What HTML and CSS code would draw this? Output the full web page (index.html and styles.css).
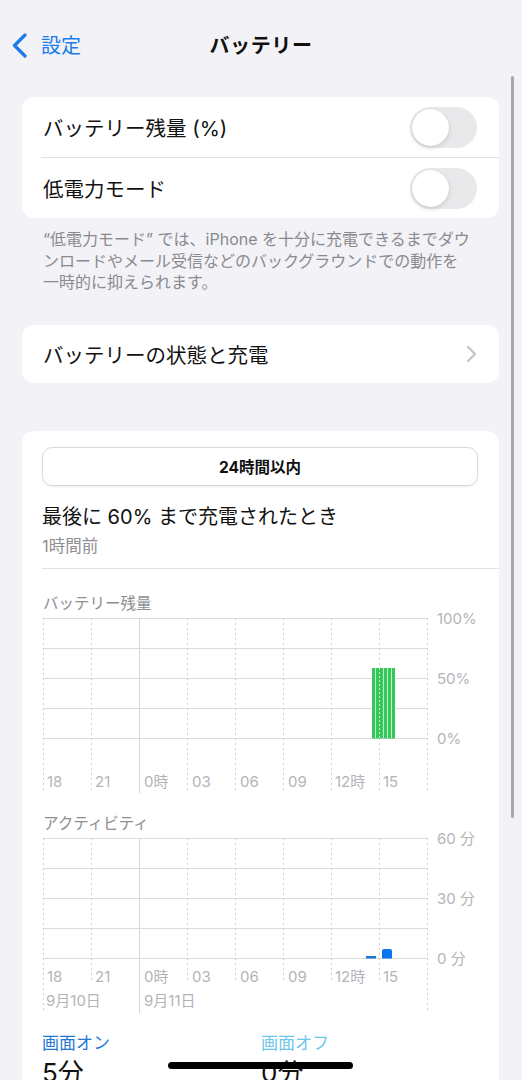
FILE: index.html
```html
<!DOCTYPE html>
<html lang="ja">
<head>
    <meta charset="UTF-8">
    <meta name="viewport" content="width=device-width, initial-scale=1.0">
    <title>バッテリー</title>
    <link rel="stylesheet" href="styles.css">
</head>
<body>
    <div class="screen">
        <div class="nav">
            <div class="back">
                <svg class="back-icon" width="17" height="25" viewBox="0 0 17 25">
                    <path d="M14 2 L3.5 12.5 L14 23" fill="none" stroke="#1a7cec" stroke-width="3.2" stroke-linecap="round" stroke-linejoin="round"/>
                </svg>
                <span>設定</span>
            </div>
            <div class="nav-title">バッテリー</div>
            <div></div>
        </div>

        <div class="card">
            <div class="row">
                <span>バッテリー残量 (%)</span>
                <div class="toggle"><div class="knob"></div></div>
            </div>
            <div class="row">
                <span>低電力モード</span>
                <div class="toggle"><div class="knob"></div></div>
            </div>
        </div>
        <p class="note">“低電力モード” では、iPhone を十分に充電できるまでダウンロードやメール受信などのバックグラウンドでの動作を<br>一時的に抑えられます。</p>

        <div class="card card-link">
            <div class="row">
                <span>バッテリーの状態と充電</span>
                <svg width="11" height="18" viewBox="0 0 11 18">
                    <path d="M2 2 L9 9 L2 16" fill="none" stroke="#c4c4c7" stroke-width="2.2" stroke-linecap="round" stroke-linejoin="round"/>
                </svg>
            </div>
        </div>

        <div class="card card-usage">
            <div class="segment">24時間以内</div>
            <div class="last-charge">最後に 60% まで充電されたとき</div>
            <div class="ago">1時間前</div>
            <div class="divider"></div>

            <div class="chart-label">バッテリー残量</div>
            <svg class="chart" width="457" height="181" viewBox="0 0 457 181">
                <g stroke="#dcdcde" stroke-width="1">
                    <line x1="1" y1="6.5" x2="385" y2="6.5"/>
                    <line x1="1" y1="36.5" x2="385" y2="36.5"/>
                    <line x1="1" y1="66.5" x2="385" y2="66.5"/>
                    <line x1="1" y1="96.5" x2="385" y2="96.5"/>
                    <line x1="1" y1="126.5" x2="385" y2="126.5"/>
                </g>
                <g stroke="#d0d0d3" stroke-width="1" stroke-dasharray="2 3">
                    <line x1="1.5" y1="6" x2="1.5" y2="181"/>
                    <line x1="49.5" y1="6" x2="49.5" y2="181"/>
                    <line x1="145.5" y1="6" x2="145.5" y2="181"/>
                    <line x1="193.5" y1="6" x2="193.5" y2="181"/>
                    <line x1="241.5" y1="6" x2="241.5" y2="181"/>
                    <line x1="289.5" y1="6" x2="289.5" y2="181"/>
                    <line x1="337.5" y1="6" x2="337.5" y2="181"/>
                    <line x1="385.5" y1="6" x2="385.5" y2="181"/>
                </g>
                <line x1="97.5" y1="6" x2="97.5" y2="181" stroke="#d6d6d9" stroke-width="1"/>
                <rect x="330" y="56" width="23" height="70.5" fill="#34c759"/>
                <g stroke="#c2efcc" stroke-width="1">
                    <line x1="333.5" y1="56" x2="333.5" y2="126"/>
                    <line x1="337.5" y1="56" x2="337.5" y2="126" stroke-dasharray="2 2"/>
                    <line x1="341.5" y1="56" x2="341.5" y2="126"/>
                    <line x1="345.5" y1="56" x2="345.5" y2="126"/>
                    <line x1="349.5" y1="56" x2="349.5" y2="126"/>
                </g>
                <g class="axis-y">
                    <text x="395" y="6">100%</text>
                    <text x="395" y="66">50%</text>
                    <text x="395" y="126">0%</text>
                </g>
                <g class="axis-x">
                    <text x="5" y="169">18</text>
                    <text x="53" y="169">21</text>
                    <text x="102" y="169">0時</text>
                    <text x="150" y="169">03</text>
                    <text x="198" y="169">06</text>
                    <text x="246" y="169">09</text>
                    <text x="293" y="169">12時</text>
                    <text x="341" y="169">15</text>
                </g>
            </svg>

            <div class="chart-label chart-label-2">アクティビティ</div>
            <svg class="chart" width="457" height="181" viewBox="0 0 457 181">
                <g stroke="#dcdcde" stroke-width="1">
                    <line x1="1" y1="6.5" x2="385" y2="6.5"/>
                    <line x1="1" y1="36.5" x2="385" y2="36.5"/>
                    <line x1="1" y1="66.5" x2="385" y2="66.5"/>
                    <line x1="1" y1="96.5" x2="385" y2="96.5"/>
                    <line x1="1" y1="126.5" x2="385" y2="126.5"/>
                </g>
                <g stroke="#d0d0d3" stroke-width="1" stroke-dasharray="2 3">
                    <line x1="1.5" y1="6" x2="1.5" y2="181"/>
                    <line x1="49.5" y1="6" x2="49.5" y2="150"/>
                    <line x1="145.5" y1="6" x2="145.5" y2="150"/>
                    <line x1="193.5" y1="6" x2="193.5" y2="150"/>
                    <line x1="241.5" y1="6" x2="241.5" y2="150"/>
                    <line x1="289.5" y1="6" x2="289.5" y2="150"/>
                    <line x1="337.5" y1="6" x2="337.5" y2="150"/>
                    <line x1="385.5" y1="6" x2="385.5" y2="181"/>
                </g>
                <line x1="97.5" y1="6" x2="97.5" y2="181" stroke="#d6d6d9" stroke-width="1"/>
                <rect x="324" y="124" width="10" height="2.5" fill="#1a74e0"/>
                <path d="M340 126.5 V119 Q340 117 342 117 H348 Q350 117 350 119 V126.5 Z" fill="#0a74ee"/>
                <g class="axis-y">
                    <text x="395" y="6">60 分</text>
                    <text x="395" y="66">30 分</text>
                    <text x="395" y="126">0 分</text>
                </g>
                <g class="axis-x">
                    <text x="5" y="144">18</text>
                    <text x="53" y="144">21</text>
                    <text x="102" y="144">0時</text>
                    <text x="150" y="144">03</text>
                    <text x="198" y="144">06</text>
                    <text x="246" y="144">09</text>
                    <text x="293" y="144">12時</text>
                    <text x="341" y="144">15</text>
                    <text x="4" y="168">9月10日</text>
                    <text x="102" y="168">9月11日</text>
                </g>
            </svg>

            <div class="screen-time">
                <div class="st-col">
                    <div class="st-label on">画面オン</div>
                    <div class="st-value">5分</div>
                </div>
                <div class="st-col">
                    <div class="st-label off">画面オフ</div>
                    <div class="st-value">0分</div>
                </div>
            </div>
        </div>

        <div class="scroll-bar"></div>
        <div class="home-bar"></div>
    </div>
</body>
</html>
```

FILE: styles.css
```css
body {
    margin: 0;
    background-color: #f2f2f7;
    font-family: Inter, "Noto Sans CJK JP", sans-serif;
    color: #111;
}
.screen {
    position: relative;
    width: 522px;
    height: 1080px;
    overflow: hidden;
}
.nav {
    display: grid;
    grid-template-columns: 1fr auto 1fr;
    align-items: center;
    height: 89px;
    padding-bottom: 8px;
}
.back {
    display: flex;
    align-items: center;
    gap: 13px;
    padding-left: 11px;
    color: #1a7cec;
    font-size: 20px;
}
.back-icon {
    margin-top: 1px;
}
.nav-title {
    font-size: 20px;
    font-weight: 700;
    letter-spacing: 0.6px;
}
.card {
    margin: 0 23px 0 22px;
    background-color: white;
    border-radius: 12px;
}
.row {
    display: flex;
    align-items: center;
    justify-content: space-between;
    height: 60px;
    padding: 0 22px 0 21px;
    font-size: 20.5px;
}
.row + .row {
    border-top: 1px solid #e0e0e3;
    margin-left: 19px;
    padding-left: 2px;
}
.toggle {
    width: 67px;
    height: 41px;
    border-radius: 21px;
    background-color: #e9e9eb;
    display: flex;
    align-items: center;
    padding-left: 2px;
    box-sizing: border-box;
}
.knob {
    width: 37px;
    height: 37px;
    border-radius: 50%;
    background-color: white;
    box-shadow: 0 2px 5px rgba(0,0,0,0.13), 0 0 1px rgba(0,0,0,0.1);
}
.note {
    width: 436px;
    margin: 11px 0 0 43px;
    font-size: 16px;
    line-height: 21.5px;
    color: #8a8a8e;
}
.card-link {
    margin-top: 31px;
}
.card-link .row {
    height: 58px;
    padding-right: 22px;
}
.card-usage {
    margin-top: 48px;
    padding: 16px 0 20px 20px;
    border-radius: 12px 12px 0 0;
}
.segment {
    height: 37px;
    margin-right: 21px;
    border: 1px solid #dadadd;
    border-radius: 10px;
    box-shadow: 0 1px 2px rgba(0,0,0,0.08);
    display: flex;
    align-items: center;
    justify-content: center;
    font-size: 15.5px;
    font-weight: 700;
}
.last-charge {
    margin-top: 17px;
    font-size: 20px;
    line-height: 28px;
}
.ago {
    margin-top: 3px;
    font-size: 16.5px;
    line-height: 24px;
    color: #8e8e93;
}
.divider {
    margin-top: 10px;
    border-top: 1px solid #e3e3e6;
}
.chart-label {
    margin-top: 24px;
    padding-left: 1px;
    font-size: 15.5px;
    line-height: 22px;
    color: #8e8e93;
}
.chart-label-2 {
    margin-top: 20px;
}
.chart {
    display: block;
    margin-top: -3px;
    overflow: visible;
}
.chart text {
    font-family: Inter, "Noto Sans CJK JP", sans-serif;
    font-size: 15px;
    fill: #b4b4b8;
    dominant-baseline: central;
}
.screen-time {
    display: grid;
    grid-template-columns: 219px 1fr;
    margin-top: 18px;
}
.st-label {
    font-size: 17px;
    line-height: 24px;
}
.st-label.on {
    color: #1f78d6;
}
.st-label.off {
    color: #6ec6ea;
}
.st-value {
    font-size: 26px;
    line-height: 32px;
    margin-top: 2px;
}
.scroll-bar {
    position: absolute;
    left: 511px;
    top: 76px;
    width: 3px;
    height: 742px;
    border-radius: 2px;
    background-color: #a8a8ac;
}
.home-bar {
    position: absolute;
    left: 168px;
    top: 1062px;
    width: 185px;
    height: 7px;
    border-radius: 4px;
    background-color: #000;
}
```
